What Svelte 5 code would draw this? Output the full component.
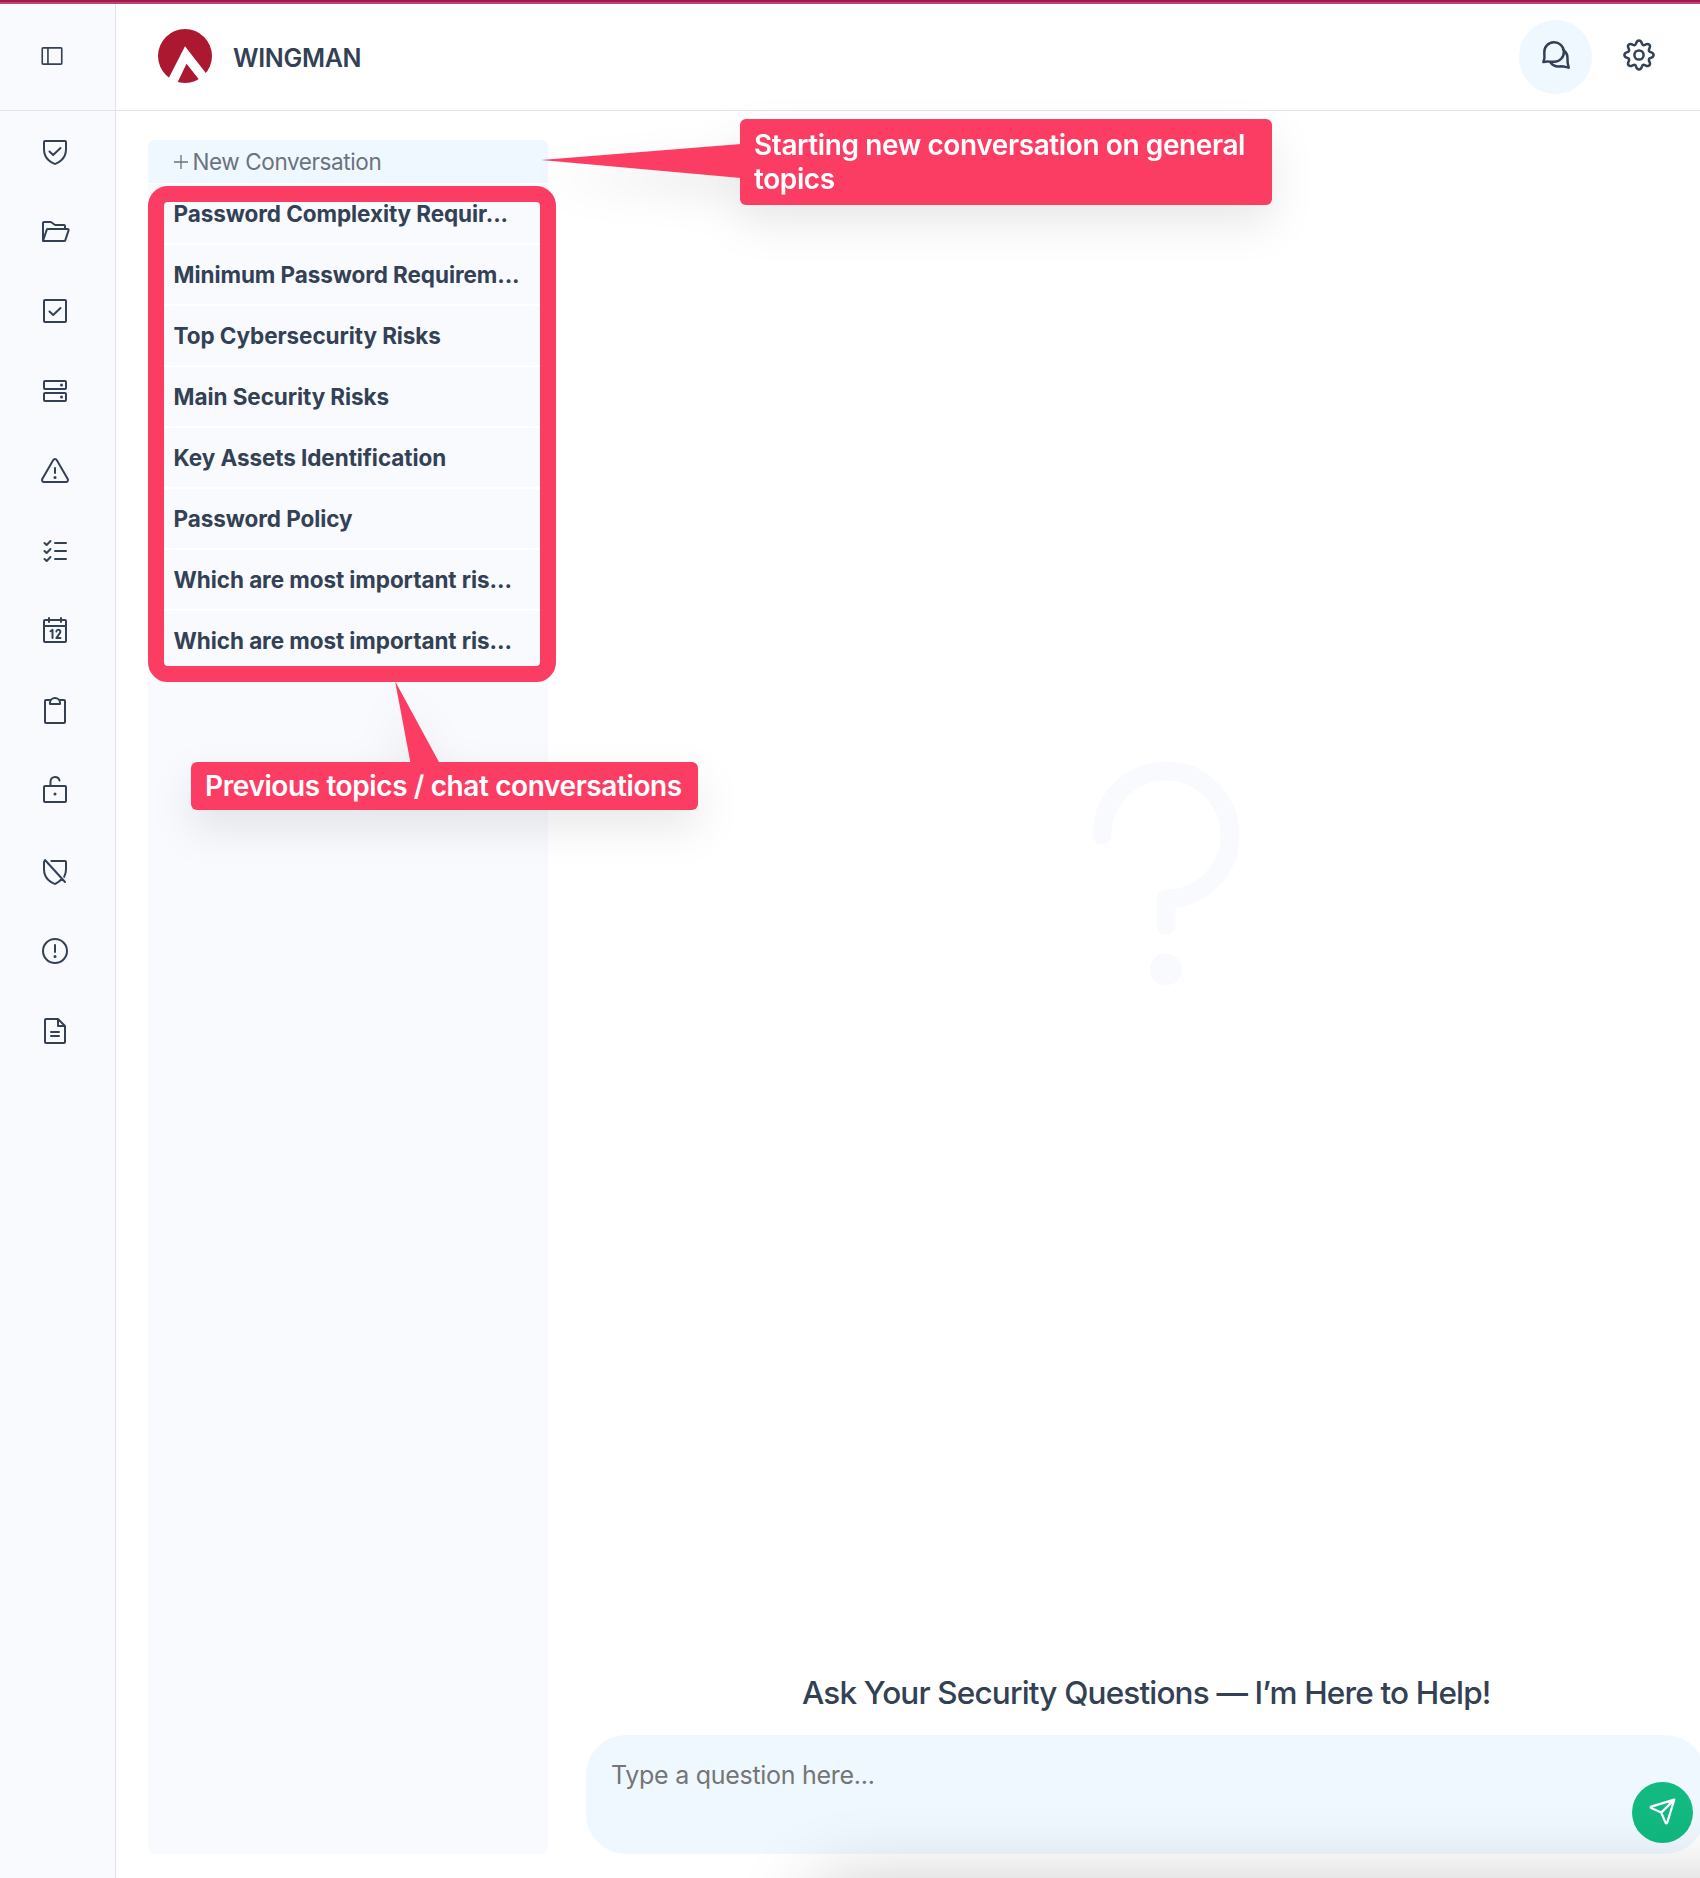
<script>
  const topics = [
    'Password Complexity Requir...',
    'Minimum Password Requirem...',
    'Top Cybersecurity Risks',
    'Main Security Risks',
    'Key Assets Identification',
    'Password Policy',
    'Which are most important ris...',
    'Which are most important ris...'
  ];

  // Outline icons on a 256-unit grid; dots are filled circles.
  const nav = [
    { name: 'Compliance', d: 'M40 114.7V56a8 8 0 0 1 8-8h160a8 8 0 0 1 8 8v58.7c0 84-71.3 111.8-85.5 116.5a7.2 7.2 0 0 1-5 0C111.3 226.5 40 198.7 40 114.7ZM172 104l-58.7 56L84 132' },
    { name: 'Projects', d: 'M32 208V64a8 8 0 0 1 8-8h53.3a8.1 8.1 0 0 1 4.8 1.6l27.8 20.8a8.1 8.1 0 0 0 4.8 1.6H200a8 8 0 0 1 8 8v24M32 208l30.2-90.5a8 8 0 0 1 7.6-5.5h159.1a8 8 0 0 1 7.6 10.5l-26.6 80a8 8 0 0 1-7.6 5.5Z' },
    { name: 'Tasks', d: 'M48 40h160a8 8 0 0 1 8 8v160a8 8 0 0 1-8 8H48a8 8 0 0 1-8-8V48a8 8 0 0 1 8-8ZM172 104l-58.7 56L84 132' },
    { name: 'Assets', d: 'M48 48h160a8 8 0 0 1 8 8v48a8 8 0 0 1-8 8H48a8 8 0 0 1-8-8V56a8 8 0 0 1 8-8ZM48 144h160a8 8 0 0 1 8 8v48a8 8 0 0 1-8 8H48a8 8 0 0 1-8-8v-48a8 8 0 0 1 8-8Z', dots: [[180, 80], [180, 176]] },
    { name: 'Risks', d: 'M114.2 40l-88 152A16 16 0 0 0 40 216h176a16 16 0 0 0 13.8-24l-88-152a15.9 15.9 0 0 0-27.6 0ZM128 104v40', dots: [[128, 180]] },
    { name: 'Controls', d: 'M128 64h88M128 128h88M128 192h88M92 48L61.3 80 44 64M92 112l-30.7 32L44 128M92 176l-30.7 32L44 192' },
    { name: 'Calendar', d: 'M48 40h160a8 8 0 0 1 8 8v160a8 8 0 0 1-8 8H48a8 8 0 0 1-8-8V48a8 8 0 0 1 8-8ZM176 24v32M80 24v32M40 88h176M92 130l16-11v65M139 132a16 16 0 1 1 29 11l-29 41h33' },
    { name: 'Audits', d: 'M163.9 40H200a8 8 0 0 1 8 8v168a8 8 0 0 1-8 8H56a8 8 0 0 1-8-8V48a8 8 0 0 1 8-8h36.1M88 72v-8a40 40 0 0 1 80 0v8Z' },
    { name: 'Access', d: 'M48 88h160a8 8 0 0 1 8 8v112a8 8 0 0 1-8 8H48a8 8 0 0 1-8-8V96a8 8 0 0 1 8-8ZM92 88V52a36 36 0 0 1 36-36c17.4 0 32.6 12.4 36 28', dots: [[128, 152]] },
    { name: 'Vulnerabilities', d: 'M48 40l160 176M99 48h109a8 8 0 0 1 8 8v58.7c0 24-5.8 43.5-14.5 59.3M182 192c-20 22-42 34-51.5 39.2a7.2 7.2 0 0 1-5 0C111.3 226.5 40 198.7 40 114.7V56a8 8 0 0 1 8-8h6' },
    { name: 'Incidents', d: 'M32 128a96 96 0 1 0 192 0a96 96 0 1 0-192 0M128 80v56', dots: [[128, 172]] },
    { name: 'Documents', d: 'M200 224H56a8 8 0 0 1-8-8V40a8 8 0 0 1 8-8h96l56 56v128a8 8 0 0 1-8 8ZM152 32v56h56M96 136h64M96 168h64' }
  ];
</script>

<div class="app">
  <aside class="sidebar">
    <button class="toggle" aria-label="Toggle sidebar">
      <svg class="line" width="26" height="26" viewBox="0 0 256 256"><path d="M40 48h176a8 8 0 0 1 8 8v144a8 8 0 0 1-8 8H40a8 8 0 0 1-8-8V56a8 8 0 0 1 8-8ZM88 48v160" /></svg>
    </button>
    <nav>
      {#each nav as item}
        <button aria-label={item.name}>
          <svg class="line" width="32" height="32" viewBox="0 0 256 256">
            <path d={item.d} />
            {#each item.dots ?? [] as [x, y]}
              <circle class="dot" cx={x} cy={y} r="12" />
            {/each}
          </svg>
        </button>
      {/each}
    </nav>
  </aside>

  <div class="content">
    <header>
      <svg class="logo" width="54" height="54" viewBox="0 0 54 54">
        <circle cx="27" cy="27" r="27" fill="#ad1831" />
        <path d="M27 17.3L9.5 51.5L18.5 55.5L28.5 34.8L43 53L50.500 47.5Z" fill="#fff" />
      </svg>
      <h1>WINGMAN</h1>
      <div class="actions">
        <button class="round active" aria-label="Chats">
          <svg class="bold" width="42" height="42" viewBox="-0.5 1 42 42">
            <path d="M7.900 27C9 24.500 9.300 21.500 8.800 17.500A9.800 9.800 0 1 1 18.800 26.800C14.500 27 11.500 25.800 7.900 27Z" />
            <path d="M15 27.500C17.500 30.900 21 31.900 25 31.200C28 31.200 30.500 32 33.200 32.700C32.200 29.500 31.800 27.500 32 24C32.200 20.500 31 17.500 28.300 15.500" />
          </svg>
        </button>
        <button class="round" aria-label="Settings">
          <svg class="bold gear" width="34" height="34" viewBox="0 0 34 34">
            <circle cx="17" cy="17" r="4.6" />
            <path d="M17 2.4C19.2 2.4 19.5 4.1 20 5.7C20.4 7.1 21.6 7.5 22.9 6.9C24.4 6.1 25.8 5.1 27.3 6.7C28.9 8.2 27.9 9.6 27.1 11.1C26.5 12.4 26.9 13.6 28.3 14C29.9 14.5 31.6 14.8 31.6 17C31.6 19.2 29.9 19.5 28.3 20C26.9 20.4 26.5 21.6 27.1 22.9C27.9 24.4 28.9 25.8 27.3 27.3C25.8 28.9 24.4 27.9 22.9 27.1C21.6 26.5 20.4 26.9 20 28.3C19.5 29.9 19.2 31.6 17 31.6C14.8 31.6 14.5 29.9 14 28.3C13.6 26.9 12.4 26.5 11.1 27.1C9.6 27.9 8.2 28.9 6.7 27.3C5.1 25.8 6.1 24.4 6.9 22.9C7.5 21.6 7.1 20.4 5.7 20C4.1 19.5 2.4 19.2 2.4 17C2.4 14.8 4.1 14.5 5.7 14C7.1 13.6 7.5 12.4 6.9 11.1C6.1 9.6 5.1 8.2 6.7 6.7C8.2 5.1 9.6 6.1 11.1 6.9C12.4 7.5 13.6 7.1 14 5.7C14.5 4.1 14.8 2.4 17 2.4Z" />
          </svg>
        </button>
      </div>
    </header>

    <main>
      <section class="topics">
        <button class="new">
          <svg width="14" height="14" viewBox="0 0 14 14"><path d="M7 0v14M0 7h14" /></svg>
          <span>New Conversation</span>
        </button>
        <ul>
          {#each topics as topic}
            <li>{topic}</li>
          {/each}
        </ul>
      </section>

      <section class="chat">
        <div class="empty">
          <svg width="148" height="226" viewBox="0 0 148 226">
            <path d="M10 74A64 64 0 1 1 74 138V164" />
            <circle cx="74" cy="208.5" r="16" />
          </svg>
        </div>
        <h2>Ask Your Security Questions — I’m Here to Help!</h2>
        <div class="ask">
          <span class="placeholder">Type a question here...</span>
          <button class="send" aria-label="Send">
            <svg width="28" height="28" viewBox="0 0 28 28"><path d="M25.3 2.600L2.300 9.600C1.500 9.900 1.400 10.700 2.200 11.100L12.200 15.600L16.600 25.700C17 26.600 17.900 26.500 18.200 25.700L25.300 2.600ZM25.300 2.600L12.200 15.600" /></svg>
          </button>
        </div>
      </section>
    </main>
  </div>

  <div class="glow"></div>
  <div class="topline"></div>
  <div class="frame"></div>

  <div class="callout start">
    <svg class="pointer" width="200" height="36" viewBox="0 0 200 36"><path d="M0 16L200 0V34Z" /></svg>
    <p>Starting new conversation on general topics</p>
  </div>
  <div class="callout previous">
    <svg class="pointer" width="46" height="82" viewBox="0 0 46 82"><path d="M0 0L15.500 82H44.500Z" /></svg>
    <p>Previous topics / chat conversations</p>
  </div>
</div>

<style>
  :global(body) { background: #fff; }
  .app {
    position: relative;
    display: flex;
    width: 1700px;
    height: 1878px;
    overflow: hidden;
    color: #334155;
    font-family: Inter, "Liberation Sans", sans-serif;
    background: #fff;
  }
  button { padding: 0; border: 0; background: none; font: inherit; color: inherit; display: flex; align-items: center; }
  h1, h2, p, ul { margin: 0; padding: 0; }
  svg { display: block; flex: none; }

  .line { fill: none; stroke: #334155; stroke-width: 16; stroke-linecap: round; stroke-linejoin: round; }
  .line .dot { fill: #334155; stroke: none; }
  .bold { fill: none; stroke: #334155; stroke-width: 2.5; stroke-linecap: round; stroke-linejoin: round; }
  .gear { margin-bottom: 4px; }

  .sidebar { box-sizing: border-box; width: 116px; flex: none; background: #f9fafe; border-right: 1px solid #e2e4ea; }
  .toggle { box-sizing: border-box; width: 115px; height: 111px; padding: 1px 0 0 39px; border-bottom: 1px solid #e2e4ea; }
  nav { display: flex; flex-direction: column; gap: 48px; padding: 24px 0 0 39.4px; }

  .content { flex: 1; min-width: 0; display: flex; flex-direction: column; }
  header { box-sizing: border-box; height: 111px; flex: none; display: flex; align-items: center; padding: 1px 25px 0 42px; border-bottom: 1px solid #e2e4ea; }
  h1 { margin: 5px 0 0 21px; font-size: 25px; font-weight: 600; line-height: 30px; letter-spacing: -0.3px; }
  .actions { display: flex; gap: 10px; margin-left: auto; padding-top: 2px; }
  .round { width: 73px; height: 74px; border-radius: 50%; justify-content: center; }
  .active { background: #f0f8ff; }

  main { flex: 1; display: flex; padding: 29px 0 24px 32px; }
  .topics { width: 400px; border-radius: 6px; overflow: hidden; background: #f9fafe; }
  .new { box-sizing: border-box; width: 100%; height: 44px; gap: 4.5px; padding-left: 26px; background: #f0f8ff; border-bottom: 1px solid #fff; color: #6b7280; font-size: 22.5px; letter-spacing: -0.4px; }
  .new svg { fill: none; stroke: #6b7280; stroke-width: 1.3; }
  ul { list-style: none; }
  li { height: 59px; padding-left: 25.6px; border-bottom: 2px solid #fff; line-height: 60px; font-size: 22.5px; font-weight: 700; letter-spacing: -0.08px; white-space: nowrap; }
  li:last-child { border-bottom: 0; }

  .chat { flex: 1; min-width: 0; margin-left: 38px; display: flex; flex-direction: column; }
  .empty { flex: 1; padding: 620.5px 0 0 505.5px; }
  .empty path { fill: none; stroke: #f9fafe; stroke-width: 19; stroke-linecap: round; stroke-linejoin: round; }
  .empty circle { fill: #f9fafe; }
  h2 { margin: 0 0 22px 216px; font-size: 31.5px; font-weight: 500; line-height: 40px; letter-spacing: -0.84px; white-space: nowrap; }
  .ask { box-sizing: border-box; width: 1119px; height: 119px; padding: 24px 12px 11px 25px; display: flex; justify-content: space-between; border-radius: 40px; background: #f0f8ff; }
  .placeholder { font-size: 25px; line-height: 32px; letter-spacing: -0.28px; color: #757575; }
  .send { align-self: flex-end; width: 61px; height: 61px; justify-content: center; border-radius: 50%; background: #12b981; }
  .send svg { margin: 0 0 3px 1px; }
  .send path { fill: none; stroke: #fff; stroke-width: 2.2; stroke-linecap: round; stroke-linejoin: round; }

  .glow { position: absolute; left: 815px; top: 1888px; width: 1000px; height: 300px; border-radius: 20px; box-shadow: 0 0 80px rgba(0, 0, 0, 0.24); }
  .topline { position: absolute; inset: 0 0 auto; height: 2px; background: #a5174d; border-bottom: 2px solid #bb4874; }
  .frame { position: absolute; left: 148px; top: 186px; width: 376px; height: 464px; border: 16px solid #fc3d63; border-radius: 20px; }

  .callout { position: absolute; box-sizing: border-box; border-radius: 6px; background: #fc3d63; color: #fff; font-size: 28px; font-weight: 600; line-height: 34px; letter-spacing: -0.4px; filter: drop-shadow(0 18px 20px rgba(0, 0, 0, 0.09)); }
  .pointer { position: absolute; fill: #fc3d63; }
  .start { left: 740px; top: 119px; width: 532px; height: 86px; padding: 9px 14px; }
  .start .pointer { right: 531px; top: 25px; }
  .previous { left: 191px; top: 762px; width: 507px; height: 48px; padding: 7px 14px; white-space: nowrap; }
  .previous .pointer { left: 204px; bottom: 47px; }
</style>
